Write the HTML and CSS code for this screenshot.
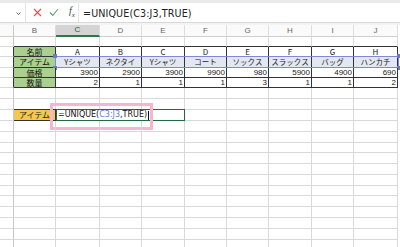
FILE: index.html
```html
<!DOCTYPE html>
<html lang="ja">
<head>
    <meta charset="UTF-8">
    <title>UNIQUE</title>
    <link rel="stylesheet" href="styles.css">
</head>
<body>

    <div class="topline"></div>

    <div class="formula-bar">
        <div class="name-box">
            <svg class="drop" width="5" height="3" viewBox="0 0 5 3"><path d="M0.5 0.5L2.5 2.5L4.5 0.5" stroke="#666" stroke-width="0.9" fill="none"/></svg>
        </div>
        <div class="bar-icons">
            <span class="x-icon">
                <svg width="9" height="9" viewBox="0 0 9 9"><path d="M1 1L8 8M8 1L1 8" stroke="#d9534f" stroke-width="1.1" fill="none"/></svg>
            </span>
            <span class="ok-icon">
                <svg width="10" height="9" viewBox="0 0 10 9"><path d="M1 4.5L3.8 7.5L9 1" stroke="#5aa36a" stroke-width="1.1" fill="none"/></svg>
            </span>
            <span class="fx">f<sub>x</sub></span>
        </div>
        <div class="formula-text">=UNIQUE(C3:J3,TRUE)</div>
    </div>

    <div class="gap"></div>

    <div class="sheet">
        <div class="row col-head">
            <span></span><span>B</span><span class="active">C</span><span>D</span><span>E</span><span>F</span><span>G</span><span>H</span><span>I</span><span>J</span>
        </div>

        <div class="row h10 above">
            <span></span><span></span><span></span><span></span><span></span><span></span><span></span><span></span><span></span><span></span>
        </div>

        <div class="row h10 data">
            <span></span><span class="lbl">名前</span><span class="c">A</span><span class="c">B</span><span class="c">C</span><span class="c">D</span><span class="c">E</span><span class="c">F</span><span class="c">G</span><span class="c">H</span>
        </div>
        <div class="row data items">
            <span></span><span class="lbl">アイテム</span><span class="c">Yシャツ</span><span class="c">ネクタイ</span><span class="c">Yシャツ</span><span class="c">コート</span><span class="c">ソックス</span><span class="c">スラックス</span><span class="c">バッグ</span><span class="c">ハンカチ</span>
            <div class="ref-box">
                <i class="hd tl"></i><i class="hd tr"></i><i class="hd bl"></i><i class="hd br"></i>
            </div>
        </div>
        <div class="row h10 data">
            <span></span><span class="lbl">価格</span><span class="n">3900</span><span class="n">2900</span><span class="n">3900</span><span class="n">9900</span><span class="n">980</span><span class="n">5900</span><span class="n">4900</span><span class="n">690</span>
        </div>
        <div class="row h10 data">
            <span></span><span class="lbl">数量</span><span class="n">2</span><span class="n">1</span><span class="n">1</span><span class="n">1</span><span class="n">3</span><span class="n">1</span><span class="n">1</span><span class="n">2</span>
        </div>

        <div class="row">
            <span></span><span></span><span></span><span></span><span></span><span></span><span></span><span></span><span></span><span></span>
        </div>
        <div class="row">
            <span></span><span></span><span></span><span></span><span></span><span></span><span></span><span></span><span></span><span></span>
        </div>

        <div class="row edit-row">
            <span></span><span class="key">アイテム</span>
            <span class="editing">=UNIQUE(<em>C3:J3</em>,TRUE)<b class="caret"></b></span>
            <span></span><span></span><span></span><span></span><span></span>
            <div class="pink-box"></div>
        </div>

        <div class="row"><span></span><span></span><span></span><span></span><span></span><span></span><span></span><span></span><span></span><span></span></div>
        <div class="row"><span></span><span></span><span></span><span></span><span></span><span></span><span></span><span></span><span></span><span></span></div>
        <div class="row h10"><span></span><span></span><span></span><span></span><span></span><span></span><span></span><span></span><span></span><span></span></div>
        <div class="row"><span></span><span></span><span></span><span></span><span></span><span></span><span></span><span></span><span></span><span></span></div>
        <div class="row"><span></span><span></span><span></span><span></span><span></span><span></span><span></span><span></span><span></span><span></span></div>
        <div class="row"><span></span><span></span><span></span><span></span><span></span><span></span><span></span><span></span><span></span><span></span></div>
        <div class="row h10"><span></span><span></span><span></span><span></span><span></span><span></span><span></span><span></span><span></span><span></span></div>
        <div class="row"><span></span><span></span><span></span><span></span><span></span><span></span><span></span><span></span><span></span><span></span></div>
        <div class="row"><span></span><span></span><span></span><span></span><span></span><span></span><span></span><span></span><span></span><span></span></div>
        <div class="row"><span></span><span></span><span></span><span></span><span></span><span></span><span></span><span></span><span></span><span></span></div>
        <div class="row"><span></span><span></span><span></span><span></span><span></span><span></span><span></span><span></span><span></span><span></span></div>
        <div class="row"><span></span><span></span><span></span><span></span><span></span><span></span><span></span><span></span><span></span><span></span></div>
    </div>

</body>
</html>
```

FILE: styles.css
```css
*{
    padding: 0;
    margin: 0;
    box-sizing: border-box;
}

body {
    width: 400px;
    height: 247px;
    overflow: hidden;
    background-color: #fff;
    font-family: "Liberation Sans", "Noto Sans CJK JP", sans-serif;
    color: #222;
}

.topline {
    height: 3px;
    background-color: #e9e9e9;
}

.formula-bar {
    display: flex;
    height: 19px;
    background-color: #fff;
}

.name-box {
    width: 26px;
    position: relative;
    border-right: 1px solid #e4e4e4;
}

.drop {
    position: absolute;
    right: 4px;
    top: 9px;
}

.bar-icons {
    width: 53px;
    display: flex;
    align-items: center;
    padding-left: 7px;
    border-right: 1px solid #e4e4e4;
}

.x-icon {
    display: flex;
    margin-right: 7px;
}

.ok-icon {
    display: flex;
    margin-right: 10px;
}

.fx {
    font-family: "Liberation Serif", serif;
    font-style: italic;
    font-size: 10px;
    line-height: 10px;
    color: #444;
}

.fx sub {
    font-size: 7px;
    line-height: 7px;
}

.formula-text {
    display: flex;
    align-items: center;
    padding-left: 4px;
    padding-top: 1px;
    font-family: "DejaVu Sans", sans-serif;
    font-size: 9.6px;
    letter-spacing: 0.1px;
    color: #222;
}

.gap {
    height: 3px;
    background-color: #f3f3f3;
    border-top: 1px solid #d8d8d8;
}

.sheet {
    width: 398px;
}

.row {
    position: relative;
    display: grid;
    grid-template-columns: 14px 42px 44px 42px 43px 42px 42px 43px 42px 44px;
    height: 11px;
}

.row.h10 {
    height: 10px;
}

.row span {
    border-right: 1px solid #d9d9d9;
    border-bottom: 1px solid #d9d9d9;
    font-size: 8px;
    line-height: 8px;
    display: flex;
    align-items: center;
    white-space: nowrap;
}

.row span:first-child {
    border-right-color: #c8c8c8;
}

/* column headers */
.col-head {
    height: 12px;
    background-color: #fafafa;
}

.col-head span {
    justify-content: center;
    color: #666;
    font-size: 8px;
    border-bottom-color: #cfcfcf;
    border-right-color: #dedede;
}

.col-head span.active {
    background-color: #d4d4d4;
    color: #21603a;
    border-bottom: 2px solid #2a7a4a;
}

/* data table */
.above span:nth-child(n+2) {
    border-bottom-color: #333;
}

.data span:nth-child(n+2) {
    border-right-color: #333;
    border-bottom-color: #333;
}

.data span:first-child {
    border-right-color: #333;
}

.lbl {
    background-color: #a9d08e;
    justify-content: center;
    font-family: "Noto Sans CJK JP", sans-serif;
    color: #111;
}

.row span.lbl {
    font-size: 8px;
    line-height: 8px;
}

.c {
    justify-content: center;
    font-family: "Noto Sans CJK JP", sans-serif;
    color: #222;
}

.items span.c {
    background-color: #e3e6f4;
    font-size: 7.5px;
}

.n {
    justify-content: flex-end;
    padding-right: 1px;
    font-family: "Liberation Sans", sans-serif;
}

.ref-box {
    position: absolute;
    left: 55px;
    top: -1px;
    width: 344px;
    height: 12px;
    border: 1px solid #7f88d2;
}

.hd {
    position: absolute;
    width: 4px;
    height: 4px;
    background-color: #6f78c8;
}

.tl { left: -3px; top: -3px; }
.tr { right: -3px; top: -3px; }
.bl { left: -3px; bottom: -3px; }
.br { right: -3px; bottom: -3px; }

/* edit row */
.key {
    background-color: #f2c94c;
    justify-content: center;
    font-family: "Noto Sans CJK JP", sans-serif;
    border-right-color: #333 !important;
    border-bottom-color: #333 !important;
    box-shadow: 0 -1px 0 #333;
}

.edit-row span.editing {
    grid-column: span 3;
    border: 1px solid #1f6b3f;
    margin-top: -1px;
    height: 12px;
    padding-left: 1px;
    font-family: "DejaVu Sans", sans-serif;
    font-size: 8px;
    color: #111;
}

.editing em {
    font-style: normal;
    color: #5a7fd8;
}

.caret {
    display: inline-block;
    width: 1px;
    height: 9px;
    margin-left: 1px;
    background-color: #111;
}

.pink-box {
    position: absolute;
    left: 50px;
    top: -7px;
    width: 103px;
    height: 27px;
    border: 3px solid #f4b7cf;
}
```
